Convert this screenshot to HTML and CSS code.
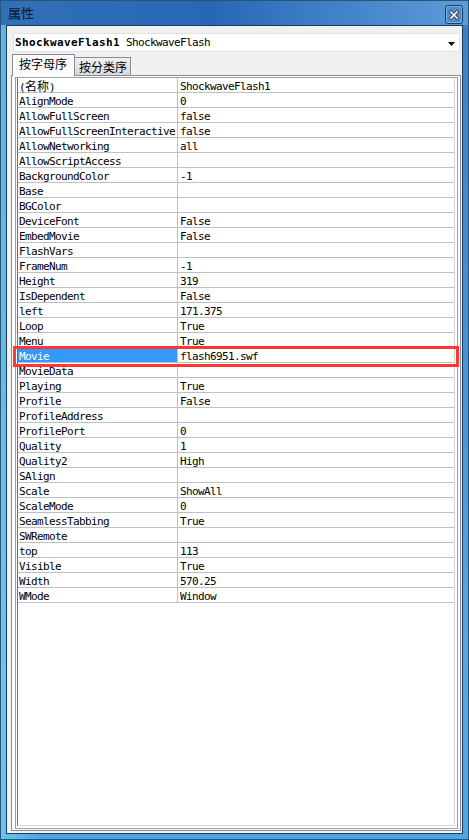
FILE: index.html
```html
<!DOCTYPE html>
<html>
<head>
<meta charset="utf-8">
<link rel="stylesheet" href="styles.css">
</head>
<body>
<div class="window">
  <div class="titlebar">
    <span class="title">属性</span>
    <div class="close">
      <svg width="18" height="19" viewBox="0 0 18 19">
        <rect x="0.5" y="0.5" width="17" height="18" rx="2" fill="#4f8ccb" stroke="#1f3d62"/>
        <rect x="1.5" y="1.5" width="15" height="16" rx="1" fill="none" stroke="#8cb8e4" stroke-opacity="0.7"/>
        <path d="M6 7 L12 13 M12 7 L6 13" stroke="#2a3f5a" stroke-width="3.2" stroke-linecap="square"/>
        <path d="M6 7 L12 13 M12 7 L6 13" stroke="#ffffff" stroke-width="1.6" stroke-linecap="square"/>
      </svg>
    </div>
  </div>
  <div class="client">
    <div class="combo">
      <span class="combo-text"><b class="obj">ShockwaveFlash1</b> ShockwaveFlash</span>
      <svg class="arrow" width="7" height="4" viewBox="0 0 7 4"><path d="M0 0 H7 L3.5 4 Z" fill="#000"/></svg>
    </div>
    <div class="tabs">
      <div class="tab active">按字母序</div>
      <div class="tab">按分类序</div>
    </div>
    <div class="panel">
      <div class="grid">
        <div class="list">
          <div class="row"><div class="name">(<span class="cjk">名称</span>)</div><div class="val">ShockwaveFlash1</div></div>
          <div class="row"><div class="name">AlignMode</div><div class="val">0</div></div>
          <div class="row"><div class="name">AllowFullScreen</div><div class="val">false</div></div>
          <div class="row"><div class="name">AllowFullScreenInteractive</div><div class="val">false</div></div>
          <div class="row"><div class="name">AllowNetworking</div><div class="val">all</div></div>
          <div class="row"><div class="name">AllowScriptAccess</div><div class="val"></div></div>
          <div class="row"><div class="name">BackgroundColor</div><div class="val">-1</div></div>
          <div class="row"><div class="name">Base</div><div class="val"></div></div>
          <div class="row"><div class="name">BGColor</div><div class="val"></div></div>
          <div class="row"><div class="name">DeviceFont</div><div class="val">False</div></div>
          <div class="row"><div class="name">EmbedMovie</div><div class="val">False</div></div>
          <div class="row"><div class="name">FlashVars</div><div class="val"></div></div>
          <div class="row"><div class="name">FrameNum</div><div class="val">-1</div></div>
          <div class="row"><div class="name">Height</div><div class="val">319</div></div>
          <div class="row"><div class="name">IsDependent</div><div class="val">False</div></div>
          <div class="row"><div class="name">left</div><div class="val">171.375</div></div>
          <div class="row"><div class="name">Loop</div><div class="val">True</div></div>
          <div class="row"><div class="name">Menu</div><div class="val">True</div></div>
          <div class="row selected"><div class="name">Movie</div><div class="val">flash6951.swf</div></div>
          <div class="row"><div class="name">MovieData</div><div class="val"></div></div>
          <div class="row"><div class="name">Playing</div><div class="val">True</div></div>
          <div class="row"><div class="name">Profile</div><div class="val">False</div></div>
          <div class="row"><div class="name">ProfileAddress</div><div class="val"></div></div>
          <div class="row"><div class="name">ProfilePort</div><div class="val">0</div></div>
          <div class="row"><div class="name">Quality</div><div class="val">1</div></div>
          <div class="row"><div class="name">Quality2</div><div class="val">High</div></div>
          <div class="row"><div class="name">SAlign</div><div class="val"></div></div>
          <div class="row"><div class="name">Scale</div><div class="val">ShowAll</div></div>
          <div class="row"><div class="name">ScaleMode</div><div class="val">0</div></div>
          <div class="row"><div class="name">SeamlessTabbing</div><div class="val">True</div></div>
          <div class="row"><div class="name">SWRemote</div><div class="val"></div></div>
          <div class="row"><div class="name">top</div><div class="val">113</div></div>
          <div class="row"><div class="name">Visible</div><div class="val">True</div></div>
          <div class="row"><div class="name">Width</div><div class="val">570.25</div></div>
          <div class="row"><div class="name">WMode</div><div class="val">Window</div></div>
        </div>
      </div>
    </div>
  </div>
  <div class="highlight-box"></div>
</div>
</body>
</html>
```
FILE: styles.css
```css
html, body {
  margin: 0;
  padding: 0;
  background: #ffffff;
}

.window {
  position: relative;
  width: 469px;
  height: 840px;
  box-sizing: border-box;
  display: flex;
  flex-direction: column;
  background:
    linear-gradient(to right, rgba(120, 222, 244, 0.6) 0px, rgba(120, 222, 244, 0) 40px),
    linear-gradient(to bottom, #3c7ec5 0%, #4a93d6 45%, #56a9e4 80%, #4aa6e6 100%);
  border: 1px solid #2b5477;
}

.titlebar {
  height: 24px;
  flex: none;
  display: flex;
  justify-content: space-between;
  align-items: flex-start;
  padding: 0 5px 0 7px;
  background: linear-gradient(to right, #3270b8 0%, #2767b4 45%, #3f80c8 70%, #5d9bd7 100%);
}

.title {
  font-family: "Noto Sans CJK SC", sans-serif;
  font-size: 13px;
  line-height: 14px;
  margin-top: 5px;
  color: #0c1622;
}

.close {
  margin-top: 4px;
  width: 18px;
  height: 19px;
}

.close svg {
  display: block;
}

.client {
  flex: 1;
  margin: 0 5px 5px 5px;
  border: 1px solid #1c3a5d;
  background: #f0f0f0;
  display: flex;
  flex-direction: column;
  padding: 7px 1px 2px 4px;
  min-height: 0;
}

.combo {
  flex: none;
  height: 19px;
  box-sizing: border-box;
  margin: 0 1px 0 2px;
  background: #ffffff;
  border: 1px solid #e2e2e2;
  display: flex;
  align-items: center;
  justify-content: space-between;
  padding: 1px 4px 0 1px;
}

.combo-text {
  font-family: "DejaVu Sans Mono", monospace;
  font-size: 11px;
  letter-spacing: -0.62px;
  line-height: 14px;
  color: #000;
  white-space: pre;
}

.combo-text .obj {
  font-weight: bold;
  letter-spacing: 0.38px;
}

.arrow {
  display: block;
  margin-top: 1px;
}

.tabs {
  flex: none;
  height: 23px;
  display: flex;
  align-items: flex-end;
  padding-left: 1px;
}

.tab {
  font-family: "Noto Sans CJK SC", sans-serif;
  font-size: 12px;
  line-height: 16px;
  color: #000;
  box-sizing: border-box;
  border: 1px solid #898c95;
  border-left: none;
  border-bottom: none;
  width: 56px;
  height: 18px;
  padding: 1px 0 0 4px;
  background: linear-gradient(to bottom, #f2f2f2 0%, #e4e4e4 50%, #d8d8d8 100%);
}

.tab.active {
  position: relative;
  z-index: 1;
  width: 63px;
  height: 22px;
  margin-bottom: -1px;
  border-left: 1px solid #898c95;
  padding: 0 0 0 6px;
  line-height: 17px;
  background: #fbfbfb;
}

.panel {
  flex: 1;
  min-height: 0;
  border: 1px solid #898c95;
  background: #fbfbfb;
  display: flex;
  flex-direction: column;
  padding: 1px 2px 1px 3px;
}

.grid {
  flex: 1;
  min-height: 0;
  border: 1px solid #a0a0a0;
  background: #ffffff;
  display: flex;
  flex-direction: column;
  padding: 0 2px 2px 1px;
}

.list {
  flex: 1;
  border-left: 1px solid #6e6e6e;
  border-right: 1px solid #d4d4d4;
  border-bottom: 1px solid #d4d4d4;
}

.row {
  display: flex;
  height: 15px;
  box-sizing: border-box;
  border-bottom: 1px solid #c0c0c0;
  font-family: "DejaVu Sans Mono", monospace;
  font-size: 11px;
  letter-spacing: -0.62px;
  line-height: 13px;
  color: #000;
  white-space: pre;
}

.name {
  width: 160px;
  flex: none;
  box-sizing: border-box;
  border-right: 1px solid #c0c0c0;
  padding: 2px 0 0 1px;
}

.val {
  flex: 1;
  padding: 2px 0 0 2px;
}

.cjk {
  font-family: "Noto Sans CJK SC", sans-serif;
  font-size: 12px;
  line-height: 12px;
  letter-spacing: 0;
}

.row.selected .name {
  background: #3399ff;
  color: #ffffff;
}

.highlight-box {
  position: absolute;
  left: 12px;
  top: 345px;
  width: 446px;
  height: 21px;
  box-sizing: border-box;
  border: 3px solid #ff3636;
  pointer-events: none;
}
```
